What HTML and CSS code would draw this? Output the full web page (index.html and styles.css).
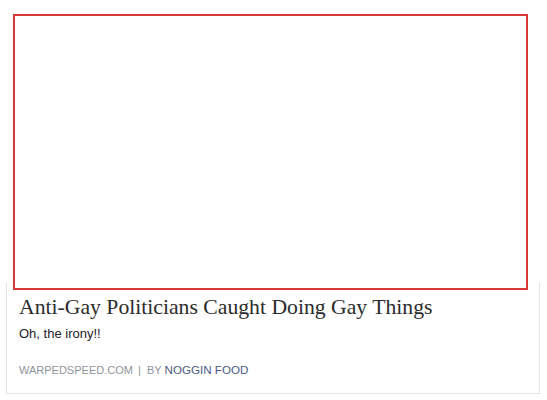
FILE: index.html
```html
<!DOCTYPE html>
<html lang="en">

<head>
    <meta charset="UTF-8">
    <title>Link preview</title>
    <link rel="stylesheet" href="styles.css">
</head>

<body>
    <div class="preview">
        <div class="image-box"></div>
        <div class="card">
            <div class="title">Anti-Gay Politicians Caught Doing Gay Things</div>
            <div class="desc">Oh, the irony!!</div>
            <div class="meta">
                <span class="domain">WARPEDSPEED.COM</span>
                <span class="sep">|</span>
                <span class="by">BY</span><span class="author">NOGGIN FOOD</span>
            </div>
        </div>
    </div>
</body>

</html>
```

FILE: styles.css
```css
body {
    margin: 0;
    background: #fff;
    font-family: 'Liberation Sans', Arial, sans-serif;
}

.preview {
    padding: 14px 0 0 6px;
    width: 534px;
}

.image-box {
    position: relative;
    z-index: 1;
    margin-left: 7px;
    width: 511px;
    height: 272px;
    border: 2px solid #d9383a;
    background: #fff;
}

.card {
    margin-top: -7px;
    border: 1px solid #e3e3e3;
    border-top: none;
    padding: 11px 12px 16px 12px;
    box-shadow: 0 1px 1px rgba(0, 0, 0, 0.04);
}

.title {
    font-family: 'Liberation Serif', Georgia, serif;
    font-size: 21.7px;
    line-height: 26px;
    color: #2b2b2b;
}

.desc {
    font-size: 13px;
    line-height: 16px;
    color: #1d2129;
    margin-top: 6px;
}

.meta {
    margin-top: 21px;
    font-size: 11px;
    line-height: 14px;
    color: #90949c;
}

.sep {
    margin: 0 3px 0 2px;
}

.author {
    margin-left: 3px;
    font-size: 11.6px;
    color: #4b5a82;
}
```
